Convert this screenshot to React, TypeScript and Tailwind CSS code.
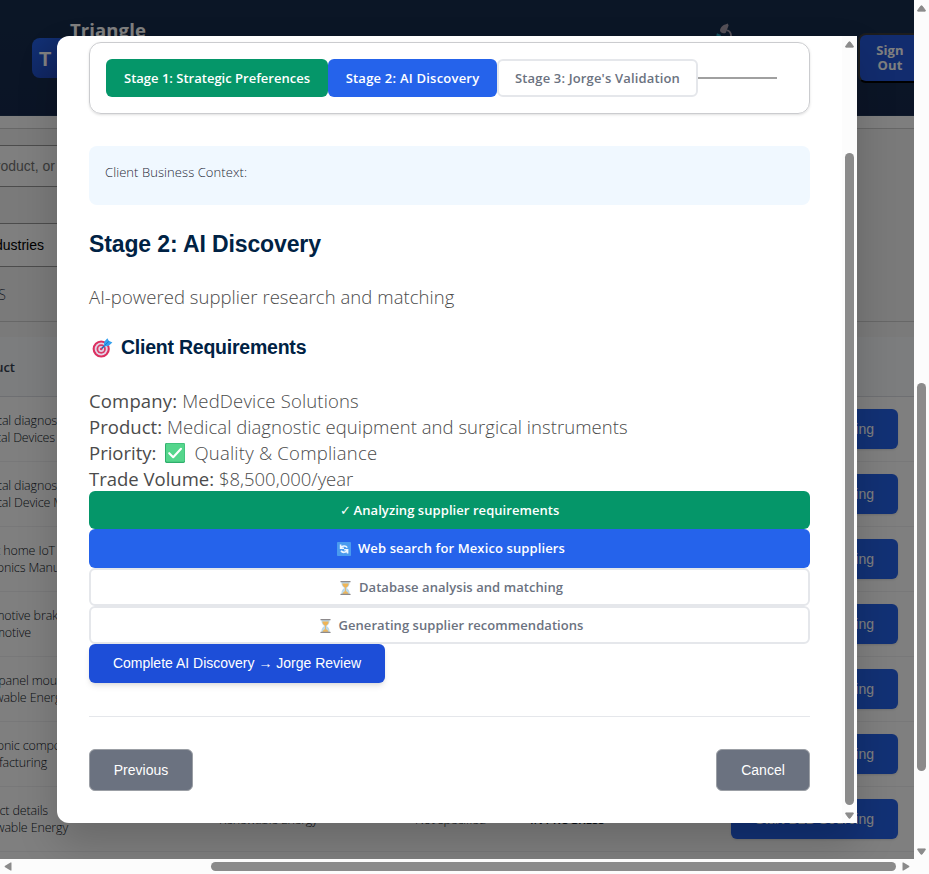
import React from "react";

const sans = "font-['Open_Sans','Noto_Sans',sans-serif]";
const arial = "font-['Liberation_Sans',Arial,sans-serif]";

type Line = { text: string; w: string };
const rows: { a: Line; b: Line; detail?: boolean }[] = [
  { a: { text: "Medical diagnos", w: "w-[57px]" }, b: { text: "Medical Devices", w: "w-[55px]" } },
  { a: { text: "Medical diagnos", w: "w-[57px]" }, b: { text: "Medical Device M", w: "w-[64px]" } },
  { a: { text: "Smart home IoT", w: "w-[55px]" }, b: { text: "Electronics Manu", w: "w-[60px]" } },
  { a: { text: "Automotive brak", w: "w-[58px]" }, b: { text: "Automotive", w: "w-[31px]" } },
  { a: { text: "Solar panel mou", w: "w-[57px]" }, b: { text: "Renewable Energy", w: "w-[67px]" } },
  { a: { text: "Electronic compo", w: "w-[61px]" }, b: { text: "Manufacturing", w: "w-[47px]" } },
  { a: { text: "Product details", w: "w-[48px]" }, b: { text: "Renewable Energy", w: "w-[68px]" }, detail: true },
];

function TailLine({ line }: { line: Line }) {
  return (
    <div className={`flex h-[17px] justify-end whitespace-nowrap ${line.w}`}>
      <span>{line.text}</span>
    </div>
  );
}

function Target() {
  return (
    <svg className="h-5 w-[21px] shrink-0" viewBox="0 0 21 20">
      <circle cx="9.2" cy="11" r="8.6" fill="#dc2f5f" />
      <circle cx="9.2" cy="11" r="6.5" fill="#e3d3e6" />
      <circle cx="9.2" cy="11" r="4.7" fill="#dc3a66" />
      <circle cx="9.2" cy="11" r="2.9" fill="#e3d3e6" />
      <circle cx="9.2" cy="11" r="1.3" fill="#dc3a66" />
      <path d="M9.7 10.6 L14 6.2" stroke="#1c66b0" strokeWidth="1.4" />
      <path d="M11.8 8.4 L12.2 3.8 L15.4 0.2 L16.8 2.8 L20.4 4.4 L16.8 7.8 Z" fill="#35a1ee" />
      <path d="M12.6 7.5 L16.8 3.4" stroke="#1672c4" strokeWidth="0.9" />
    </svg>
  );
}

function GreenCheck() {
  return (
    <svg className="mr-[9px] ml-[9px] inline-block h-5 w-[20px] align-[-3px]" viewBox="0 0 20 20">
      <rect x="0" y="0" width="20" height="20" rx="1.4" fill="#2fae6c" />
      <rect x="1" y="0.4" width="18.6" height="18.4" rx="1" fill="#55d68c" />
      <path d="M4.2 10.2 L8.2 14.2 L16 5.8" fill="none" stroke="#fff" strokeWidth="2.1" strokeLinecap="round" strokeLinejoin="round" />
    </svg>
  );
}

function Refresh() {
  return (
    <svg className="mr-[7px] ml-[3px] h-[14px] w-[14px]" viewBox="0 0 14 14">
      <rect width="14" height="14" rx="0.8" fill="#4a9bef" />
      <path d="M3.6 2.6 V6.2 H7 M4 5.8 C5.2 3.6 8.8 3.4 10.2 5.6" fill="none" stroke="#eef6ff" strokeWidth="1.6" />
      <path d="M10.6 11.4 V7.8 H7.2 M10.2 8.4 C9.2 10.8 5.4 11 4 8.8" fill="none" stroke="#eef6ff" strokeWidth="1.6" />
    </svg>
  );
}

function Hourglass() {
  return (
    <svg className="mr-[8px] ml-[4px] h-[14px] w-[11px]" viewBox="0 0 11 14">
      <path d="M1.4 1 H9.6 C9.6 4.5 8.6 5.5 6.6 7 C8.6 8.5 9.6 9.5 9.6 13 H1.4 C1.4 9.5 2.4 8.5 4.4 7 C2.4 5.5 1.4 4.5 1.4 1 Z" fill="#bcd9ea" />
      <path d="M2.3 2.4 H8.7 C8.5 4.8 7.2 5.8 5.5 7 C3.8 5.8 2.5 4.8 2.3 2.4 Z" fill="#efb557" />
      <path d="M5.5 7 V10 L8.2 12.4 H2.8 L5.5 10" fill="#efb557" stroke="#efb557" strokeWidth="0.8" />
      <rect x="0.4" y="0" width="10.2" height="1.3" rx="0.5" fill="#8d8a8c" />
      <rect x="0.4" y="12.7" width="10.2" height="1.3" rx="0.5" fill="#8d8a8c" />
    </svg>
  );
}

function Microscope() {
  return (
    <svg className="h-4 w-4" viewBox="0 0 16 16">
      <path d="M4 7.6 C4 5 6.6 2 9.4 1.4 L11.8 0.4 L12.6 2.4 L9.8 9.8 C7.6 11 4.4 10 4 7.6 Z" fill="#a89fae" />
      <path d="M0.6 11.4 L4.6 13" stroke="#28a0b8" strokeWidth="2.4" />
      <path d="M10.4 7.4 C13.6 7.4 15.4 10 15 14" fill="none" stroke="#a89fae" strokeWidth="1.8" />
    </svg>
  );
}

function Arrow({ d, cls }: { d: string; cls: string }) {
  return (
    <svg className={cls} viewBox="0 0 10 8" preserveAspectRatio="none">
      <path d={d} fill="#8b8b8b" stroke="#8b8b8b" strokeLinejoin="round" />
    </svg>
  );
}
const UP = "M4.3 1 H5.7 L9.2 6 V7 H0.8 V6 Z";
const DOWN = "M4.3 7 H5.7 L9.2 2 V1 H0.8 V2 Z";

function Page() {
  return (
    <div className={`relative h-[859px] w-[914px] overflow-hidden bg-white ${sans}`}>
      <header className="flex h-[116px] border-b border-[#1f3454] bg-linear-to-b from-[#162d4c] to-[#16294c]">
        <div className={`mt-[38px] ml-8 flex h-10 w-10 shrink-0 items-center rounded-lg bg-linear-to-br from-[#2563eb] to-[#1d3fae] pt-[2px] pl-[7px] text-[20px] font-bold text-white ${arial}`}>
          T
        </div>
        <div className="mt-[17px] ml-[-2px] text-[18.5px] leading-[26px] font-bold tracking-[0.1px] text-white">Triangle</div>
        <div className="mt-[23px] ml-auto h-4 w-4">
          <Microscope />
        </div>
        <div className="mt-[33px] mr-[-10px] ml-[126px] flex h-[50px] w-[66px] shrink-0 items-center justify-center rounded-lg border-2 border-[#3a3a3a] border-b-black bg-[#2459dc] pr-[2px] pb-[1px] text-center text-[13px] leading-[15px] font-bold tracking-[0.1px] text-white">
          Sign
          <br />
          Out
        </div>
      </header>
      <div className="h-[13px] border-b border-[#cfcfcf] bg-[#fcfcfc]" />
      <section className={`h-[193px] border-b border-[#cfcfcf] bg-[#f5f5f5] pt-4 text-[14px] ${arial}`}>
        <div className="flex h-[42px] w-[300px] items-center border-y border-[#999] bg-white">
          <div className="flex w-[55px] justify-end whitespace-nowrap text-[#757575]">Search by product, or</div>
        </div>
        <div className="mt-9 flex h-11 w-[300px] items-center border-y border-[#999] bg-white">
          <div className="flex w-[44px] justify-end whitespace-nowrap text-black">All Industries</div>
        </div>
        <div className={`mt-5 flex w-[6px] justify-end text-[14px] leading-4 font-light text-[#374151] ${sans}`}>RESULTS</div>
      </section>
      <div className="h-[15px] bg-[#f5f5f5]" />
      <div className="flex h-[60px] items-center border-b border-[#dcdfe4] bg-[#f8fafc] pt-[2px]">
        <div className="flex w-[15px] justify-end text-[13px] font-semibold text-[#374151]">Product</div>
      </div>
      {rows.map((r, i) => (
        <div key={i} className="flex h-[65px] border-b border-[#f0f1f3] bg-white text-[12.5px] leading-[17px] font-light text-[#111827]">
          <div className="w-[219px] shrink-0 pt-[15px] tracking-[-0.15px]">
            <TailLine line={r.a} />
            <TailLine line={r.b} />
          </div>
          <div className="w-[196px] shrink-0 pt-[16px]">{r.detail && <div className="leading-[34px] tracking-[-0.27px]">Renewable Energy</div>}</div>
          <div className="w-[115px] shrink-0 pt-[16px]">{r.detail && <div className="leading-[34px] tracking-[-0.2px]">Not specified</div>}</div>
          <div className="w-[201px] shrink-0 pt-[16px]">{r.detail && <div className="text-[12px] leading-[34px] font-semibold tracking-[-0.2px]">IN PROGRESS</div>}</div>
          <div className={`mt-3 flex h-10 w-[167px] shrink-0 items-center justify-end rounded-md bg-[#2463eb] pr-6 text-[14px] font-normal text-white shadow ${arial}`}>
            Start B2B Sourcing
          </div>
        </div>
      ))}
      <div className="absolute inset-0 bg-black/50" />
    </div>
  );
}

const step = "flex w-full items-center justify-center rounded-md text-[13px] font-semibold tracking-[0.06px]";
const pill = "flex h-[38px] items-center justify-center rounded-md pt-px";

function Modal() {
  return (
    <div className="absolute top-9 left-[57px] flex h-[787px] w-[800px] overflow-hidden rounded-l-xl bg-white">
      <div className={`flex w-[785px] flex-col px-8 pt-[6px] ${sans}`}>
        <div className="flex h-[72px] items-center rounded-xl border border-[#cbcccf] px-4 text-[13px] font-semibold shadow-sm">
          <div className={`${pill} w-[222px] bg-[#059669] text-white`}>Stage 1: Strategic Preferences</div>
          <div className={`${pill} w-[169px] bg-[#2563eb] tracking-[0.22px] text-white`}>Stage 2: AI Discovery</div>
          <div className={`${pill} w-[201px] border-2 border-[#e5e7eb] tracking-[0.16px] text-[#6b7280]`}>Stage 3: Jorge's Validation</div>
          <div className="h-[2px] w-[79px] bg-[#a0a0a0]" />
        </div>
        <div className="mt-8 h-[59px] rounded-lg bg-[#f0f8ff] px-4 pt-4 text-[13px] leading-5 font-light tracking-[0.07px] text-[#1f2937]">Client Business Context:</div>
        <h2 className={`mt-[23px] text-[23px] leading-8 font-bold tracking-[-0.12px] text-[#002244] ${arial}`}>Stage 2: AI Discovery</h2>
        <p className="mt-[24px] text-[18.5px] leading-[26px] font-light tracking-[0.05px] text-[#4b4b4b]">AI-powered supplier research and matching</p>
        <h3 className={`mt-[24px] flex h-[28px] items-center text-[19.5px] font-bold tracking-[-0.23px] text-[#002244] ${arial}`}>
          <span className="mr-[8px] ml-[3px] flex">
            <Target />
          </span>
          Client Requirements
        </h3>
        <div className="mt-[26px] h-[103px] text-[18.5px] leading-[26px] font-light text-[#4b4b4b]">
          <div className="h-[26px] tracking-[0.16px]"><span className="font-normal">Company:</span> MedDevice Solutions</div>
          <div className="h-[26px] tracking-[0.04px]"><span className="font-normal">Product:</span> Medical diagnostic equipment and surgical instruments</div>
          <div className="h-[26px] tracking-[0.22px]"><span className="font-normal tracking-[0px]">Priority:</span><GreenCheck />Quality &amp; Compliance</div>
          <div className="h-[26px]"><span className="font-normal">Trade Volume:</span> $8,500,000/year</div>
        </div>
        <div className={`${step} h-[38px] bg-[#059669] pt-px text-white`}><span className="mr-[3px] font-normal">✓</span>Analyzing supplier requirements</div>
        <div className={`${step} h-[39px] bg-[#2563eb] tracking-[0.12px] text-white`}><Refresh />Web search for Mexico suppliers</div>
        <div className={`${step} h-[38px] border-2 border-[#e5e7eb] pt-px text-[#6b7280]`}><Hourglass />Database analysis and matching</div>
        <div className={`${step} h-[38px] border-2 border-[#e5e7eb] pt-px text-[#6b7280]`}><Hourglass />Generating supplier recommendations</div>
        <button className={`flex h-[39px] w-[296px] items-center justify-center rounded-md bg-[#1d4ed8] text-[14px] text-white shadow-md ${arial}`}>Complete AI Discovery → Jorge Review</button>
        <div className={`mt-[33px] flex justify-between border-t border-[#e5e7eb] pt-8 text-[14px] text-white ${arial}`}>
          <button className="h-[42px] w-[104px] rounded-md border border-[#9b9fa5] bg-[#6b7280]">Previous</button>
          <button className="h-[42px] w-[94px] rounded-md border border-[#9b9fa5] bg-[#6b7280]">Cancel</button>
        </div>
      </div>
      <div className="flex w-[15px] flex-col items-center bg-[#fcfcfc]">
        <Arrow d={UP} cls="mt-[5px] h-[7px] w-[9px]" />
        <div className="mt-[105px] h-[652px] w-[9px] rounded-full bg-[#8b8b8b]" />
        <Arrow d={DOWN} cls="mt-[7px] h-[7px] w-[9px]" />
      </div>
    </div>
  );
}

export default function App() {
  return (
    <div className="relative h-[874px] w-[929px] overflow-hidden bg-[#fcfcfc]">
      <div className="flex">
        <div className="relative h-[859px] w-[914px] overflow-hidden">
          <Page />
          <div className="absolute top-9 left-[57px] h-[787px] w-[800px] rounded-l-xl shadow-[0_20px_40px_rgba(0,0,0,0.18)]" />
        </div>
        <div className="flex w-[15px] flex-col items-center">
          <Arrow d={UP} cls="mt-[5px] h-[7px] w-[9px]" />
          <div className="mt-[371px] h-[388px] w-[9px] rounded-full bg-[#8b8b8b]" />
          <Arrow d={DOWN} cls="mt-[77px] h-[7px] w-[9px]" />
        </div>
      </div>
      <div className="flex h-[15px] w-[914px] items-center">
        <svg className="ml-1 h-[9px] w-[8px]" viewBox="0 0 8 9"><path d="M7.5 0.5 V8.5 H6.5 L0.7 5 V4 L6.5 0.5 Z" fill="#8b8b8b" /></svg>
        <div className="ml-[199px] h-[9px] w-[685px] rounded-full bg-[#8b8b8b]" />
        <svg className="ml-[6px] h-[9px] w-[8px]" viewBox="0 0 8 9"><path d="M0.5 0.5 V8.5 H1.5 L7.3 5 V4 L1.5 0.5 Z" fill="#8b8b8b" /></svg>
      </div>
      <Modal />
    </div>
  );
}
